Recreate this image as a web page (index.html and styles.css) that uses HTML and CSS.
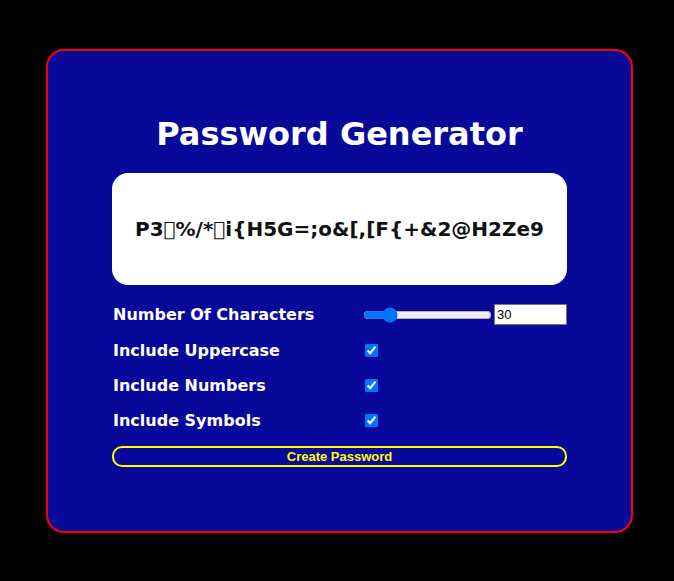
FILE: index.html
```html
<!DOCTYPE html>
<html>
<head>
<meta charset="utf-8">
<link rel="stylesheet" href="styles.css">
</head>
<body>
<div class="card">
  <h1 class="title">Password Generator</h1>
  <div class="result">P3&#xFFFF;%/*&#xFFFF;i{H5G=;o&amp;[,[F{+&amp;2@H2Ze9</div>
  <div class="options">
    <label class="label row-first">Number Of Characters</label>
    <div class="control row-first">
      <input class="range" type="range" min="10" max="128" value="30">
      <input class="num" type="number" value="30">
    </div>
    <label class="label">Include Uppercase</label>
    <div class="control"><input class="check" type="checkbox" checked></div>
    <label class="label">Include Numbers</label>
    <div class="control"><input class="check" type="checkbox" checked></div>
    <label class="label">Include Symbols</label>
    <div class="control"><input class="check" type="checkbox" checked></div>
  </div>
  <button class="btn">Create Password</button>
</div>
</body>
</html>
```
FILE: styles.css
```css
html, body {
  margin: 0;
  padding: 0;
  background: #000;
}
body {
  padding: 49px 0 0 46px;
}
.card {
  box-sizing: border-box;
  width: 587px;
  height: 484px;
  background: #08089b;
  border: 2px solid #ff0000;
  border-radius: 18px;
  padding: 65px 64px 0 64px;
  display: flex;
  flex-direction: column;
}
.title {
  margin: 0;
  height: 37px;
  line-height: 37px;
  text-align: center;
  color: #fff;
  font-family: "DejaVu Sans", Verdana, sans-serif;
  font-weight: bold;
  font-size: 32px;
}
.result {
  margin-top: 20px;
  height: 112px;
  background: #fff;
  border-radius: 16px;
  display: flex;
  align-items: center;
  justify-content: center;
  color: #111;
  font-family: "DejaVu Sans", Verdana, sans-serif;
  font-weight: bold;
  font-size: 20px;
}
.options {
  margin-top: 11px;
  display: grid;
  grid-template-columns: 249px 1fr;
  grid-template-rows: 37px 35px 35px 35px;
}
.label {
  display: flex;
  align-items: center;
  padding-left: 1px;
  color: #fff;
  font-family: "DejaVu Sans", Tahoma, sans-serif;
  font-weight: bold;
  font-size: 16px;
}
.control {
  display: flex;
  align-items: center;
}
.range {
  width: 129px;
  margin: 0 2px;
}
.num {
  box-sizing: border-box;
  width: 73px;
  height: 21px;
  margin: 0;
  padding: 1px 2px;
  border: 1px solid #767676;
  font-family: "Liberation Sans", Arial, sans-serif;
  font-size: 13px;
}
.check {
  width: 13px;
  height: 13px;
  margin: 0 0 0 4px;
}
.btn {
  margin-top: 8px;
  height: 21px;
  background: transparent;
  border: 2px solid #ffff00;
  border-radius: 10px;
  color: #ffff00;
  font-family: "Liberation Sans", Arial, sans-serif;
  font-weight: bold;
  font-size: 13px;
  padding: 0;
}
```
